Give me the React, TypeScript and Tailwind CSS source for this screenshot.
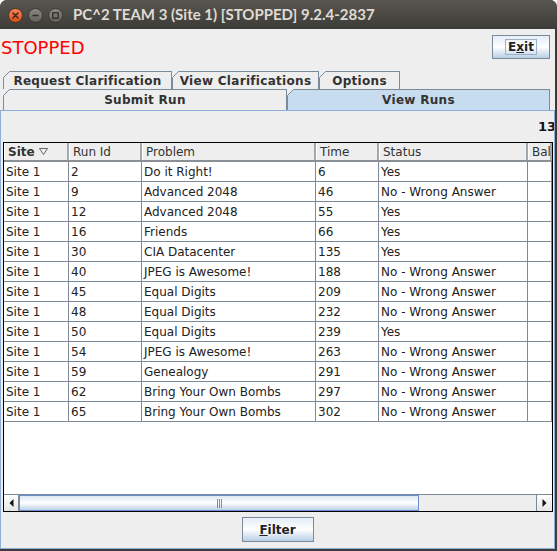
import React from "react";

type Run = { site: string; id: string; problem: string; time: string; status: string };

const runs: Run[] = [
  { site: "Site 1", id: "2", problem: "Do it Right!", time: "6", status: "Yes" },
  { site: "Site 1", id: "9", problem: "Advanced 2048", time: "46", status: "No - Wrong Answer" },
  { site: "Site 1", id: "12", problem: "Advanced 2048", time: "55", status: "Yes" },
  { site: "Site 1", id: "16", problem: "Friends", time: "66", status: "Yes" },
  { site: "Site 1", id: "30", problem: "CIA Datacenter", time: "135", status: "Yes" },
  { site: "Site 1", id: "40", problem: "JPEG is Awesome!", time: "188", status: "No - Wrong Answer" },
  { site: "Site 1", id: "45", problem: "Equal Digits", time: "209", status: "No - Wrong Answer" },
  { site: "Site 1", id: "48", problem: "Equal Digits", time: "232", status: "No - Wrong Answer" },
  { site: "Site 1", id: "50", problem: "Equal Digits", time: "239", status: "Yes" },
  { site: "Site 1", id: "54", problem: "JPEG is Awesome!", time: "263", status: "No - Wrong Answer" },
  { site: "Site 1", id: "59", problem: "Genealogy", time: "291", status: "No - Wrong Answer" },
  { site: "Site 1", id: "62", problem: "Bring Your Own Bombs", time: "297", status: "No - Wrong Answer" },
  { site: "Site 1", id: "65", problem: "Bring Your Own Bombs", time: "302", status: "No - Wrong Answer" },
];

const SlantCorner = ({ bg }: { bg: string }) => (
  <svg className="absolute -left-px -top-px" width="7" height="7" viewBox="0 0 7 7">
    <polygon points="0,0 7,0 0,7" fill={bg} />
    <line x1="0.5" y1="6.5" x2="6.5" y2="0.5" stroke="#7a8a99" strokeWidth="1" />
  </svg>
);

const Tab = ({ label, w, h, selected }: { label: string; w: string; h: string; selected?: boolean }) => (
  <div
    className={`relative ${w} ${h} shrink-0 border-l border-t border-r border-[#7a8a99] flex items-center justify-center text-[12px] font-bold tracking-[0.3px] text-[#333333] ${
      selected ? "bg-[#c8dcf0]" : "bg-[#eeeeee]"
    }`}
  >
    <SlantCorner bg="#eeeeee" />
    {label}
  </div>
);

const Cell = ({ w, children, last }: { w: string; children?: React.ReactNode; last?: boolean }) => (
  <div
    className={`${w} ${last ? "flex-1" : "shrink-0"} h-full border-r border-[#7a8a99] pl-[2px] flex items-center whitespace-nowrap overflow-hidden`}
  >
    {children}
  </div>
);

const HeadCell = ({ w, children, last }: { w: string; children?: React.ReactNode; last?: boolean }) => (
  <div
    className={`${w} ${last ? "flex-1" : "shrink-0"} h-full border-r-2 border-r-[#a0a8b0] border-l border-l-white bg-[#eeeeee] pl-[3px] flex items-center whitespace-nowrap overflow-hidden text-[#333333]`}
  >
    {children}
  </div>
);

const widths = ["w-[65px]", "w-[73px]", "w-[174px]", "w-[63px]", "w-[149px]"];

export default function App() {
  return (
    <div className="w-[557px] h-[551px] bg-[#3c3b37] rounded-t-[7px] overflow-hidden flex flex-col font-['DejaVu_Sans',sans-serif]">
      {/* title bar */}
      <div className="h-[29px] shrink-0 bg-gradient-to-b from-[#5a5751] to-[#3c3b37] flex items-center">
        <div className="flex items-center gap-[5px] pl-[8px] pt-[1px]">
          <svg width="15" height="15" viewBox="0 0 15 15">
            <defs>
              <linearGradient id="cl" x1="0" y1="0" x2="0" y2="1">
                <stop offset="0" stopColor="#f58a5c" />
                <stop offset="1" stopColor="#dd4a14" />
              </linearGradient>
            </defs>
            <circle cx="7.5" cy="7.5" r="7" fill="url(#cl)" stroke="#3a2a22" strokeWidth="0.8" />
            <path d="M5 5 L10 10 M10 5 L5 10" stroke="#3c2a20" strokeWidth="1.6" strokeLinecap="round" />
          </svg>
          <svg width="15" height="15" viewBox="0 0 15 15">
            <defs>
              <linearGradient id="gr" x1="0" y1="0" x2="0" y2="1">
                <stop offset="0" stopColor="#8c8a84" />
                <stop offset="1" stopColor="#5f5d58" />
              </linearGradient>
            </defs>
            <circle cx="7.5" cy="7.5" r="7" fill="url(#gr)" stroke="#2f2e2b" strokeWidth="0.8" />
            <path d="M4.5 7.5 L10.5 7.5" stroke="#2e2d2a" strokeWidth="1.6" />
          </svg>
          <svg width="15" height="15" viewBox="0 0 15 15">
            <circle cx="7.5" cy="7.5" r="7" fill="url(#gr)" stroke="#2f2e2b" strokeWidth="0.8" />
            <rect x="4.8" y="4.8" width="5.4" height="5.4" fill="none" stroke="#2e2d2a" strokeWidth="1.3" />
          </svg>
        </div>
        <div className="pl-[10px] text-[15px] font-bold text-[#dfdbd2] font-['Lato',sans-serif]">
          PC^2 TEAM 3 (Site 1) [STOPPED] 9.2.4-2837
        </div>
      </div>

      {/* body */}
      <div className="flex-1 mr-[2px] mb-[2px] bg-[#eeeeee] flex flex-col">
        <div className="h-[42px] shrink-0 flex items-start justify-between">
          <div className="mt-[10px] ml-[1px] text-[18px] leading-none text-[#ff0000]">STOPPED</div>
          <button className="mt-[6px] mr-[5px] w-[58px] h-[24px] border border-[#7a8a99] bg-gradient-to-b from-[#e4edf7] via-[#ffffff] to-[#b8cfe5] flex items-center justify-center">
            <span className="border border-[#9db0c8] px-[2px] h-[16px] flex items-center text-[12px] font-bold text-[#222222]">
              E<span className="underline">x</span>it
            </span>
          </button>
        </div>

        <div className="flex pl-[3px] h-[18px] shrink-0">
          <Tab label="Request Clarification" w="w-[169px]" h="h-[18px]" />
          <Tab label="View Clarifications" w="w-[147px]" h="h-[18px]" />
          <Tab label="Options" w="w-[81px]" h="h-[18px]" />
        </div>
        <div className="flex pl-[3px] h-[21px] shrink-0">
          <Tab label="Submit Run" w="w-[284px]" h="h-[21px]" />
          <Tab label="View Runs" w="w-[263px]" h="h-[21px]" selected />
        </div>

        {/* panel */}
        <div className="flex-1 border border-[#8fadd9] flex flex-col">
          <div className="h-[31px] shrink-0 flex justify-end items-center pt-[1px] text-[13px] font-bold text-[#111111] overflow-hidden">
            <span className="mr-[-2px]">13</span>
          </div>

          <div className="ml-[2px] mr-[1px] h-[370px] border border-black bg-white flex flex-col text-[12px] text-[#222222] overflow-hidden">
            <div className="h-[19px] shrink-0 flex border-b-2 border-[#8a8f96]">
              <HeadCell w={widths[0]}>
                <span className="font-bold">Site</span>
                <svg className="ml-[4px]" width="9" height="7" viewBox="0 0 9 7">
                  <polygon points="0.5,0.5 8.5,0.5 4.5,6.5" fill="none" stroke="#555" strokeWidth="0.9" />
                </svg>
              </HeadCell>
              <HeadCell w={widths[1]}>Run Id</HeadCell>
              <HeadCell w={widths[2]}>Problem</HeadCell>
              <HeadCell w={widths[3]}>Time</HeadCell>
              <HeadCell w={widths[4]}>Status</HeadCell>
              <HeadCell w="w-[30px]" last>Ball</HeadCell>
            </div>

            <div className="flex-1 flex flex-col">
              {runs.map((r) => (
                <div key={r.id} className="h-[20px] shrink-0 flex border-b border-[#7a8a99]">
                  <Cell w={widths[0]}>{r.site}</Cell>
                  <Cell w={widths[1]}>{r.id}</Cell>
                  <Cell w={widths[2]}>{r.problem}</Cell>
                  <Cell w={widths[3]}>{r.time}</Cell>
                  <Cell w={widths[4]}>{r.status}</Cell>
                  <Cell w="w-[30px]" last />
                </div>
              ))}
            </div>

            {/* horizontal scrollbar */}
            <div className="h-[17px] shrink-0 flex border-t border-[#7a8a99] bg-[#eeeeee]">
              <div className="w-[15px] h-full border-r border-[#7a8a99] bg-gradient-to-b from-white to-[#e6e6e6] flex items-center justify-center">
                <svg width="5" height="8" viewBox="0 0 5 8">
                  <polygon points="4.5,0 4.5,8 0.5,4" fill="#111" />
                </svg>
              </div>
              <div className="w-[400px] h-full border border-[#6d8fd0] bg-gradient-to-b from-[#dde8f4] via-[#ffffff] to-[#bcd1e8] flex items-center justify-center">
                <div className="flex gap-[1px] h-[9px]">
                  <div className="w-px h-full bg-[#6d8fd0]" />
                  <div className="w-px h-full bg-[#6d8fd0]" />
                  <div className="w-px h-full bg-[#6d8fd0]" />
                </div>
              </div>
              <div className="flex-1 h-full" />
              <div className="w-[16px] h-full border-l border-[#7a8a99] bg-gradient-to-b from-white to-[#e6e6e6] flex items-center justify-center">
                <svg width="5" height="8" viewBox="0 0 5 8">
                  <polygon points="0.5,0 0.5,8 4.5,4" fill="#111" />
                </svg>
              </div>
            </div>
          </div>

          <div className="flex-1 flex justify-center items-start pt-[5px]">
            <button className="w-[72px] h-[25px] border border-[#7a8a99] bg-gradient-to-b from-[#e4edf7] via-[#ffffff] to-[#b8cfe5] flex items-center justify-center text-[12px] font-bold text-[#222222]">
              <span className="underline">F</span>ilter
            </button>
          </div>
        </div>
      </div>
    </div>
  );
}
